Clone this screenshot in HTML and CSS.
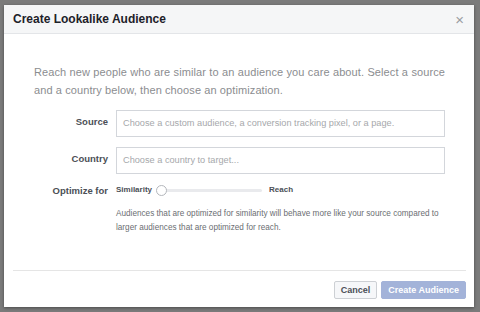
FILE: index.html
```html
<!DOCTYPE html>
<html lang="en">
  <head>
    <meta charset="UTF-8">
    <title>Create Lookalike Audience</title>
    <link rel="stylesheet" href="styles.css">
  </head>
  <body>
    <div class="backdrop">
        <div class="dialog">
            <div class="dialog-header">
                <h2 class="dialog-title">Create Lookalike Audience</h2>
                <span class="close">&#215;</span>
            </div>

            <div class="dialog-body">
                <p class="intro">
                    Reach new people who are similar to an audience you care about. Select a source
                    and a country below, then choose an optimization.
                </p>

                <div class="form-row">
                    <label class="form-label">Source</label>
                    <div class="text-input">Choose a custom audience, a conversion tracking pixel, or a page.</div>
                </div>
                <div class="form-row">
                    <label class="form-label">Country</label>
                    <div class="text-input">Choose a country to target...</div>
                </div>
                <div class="form-row optimize-row">
                    <label class="form-label">Optimize for</label>
                    <div class="slider">
                        <span class="slider-end">Similarity</span>
                        <div class="slider-track">
                            <div class="slider-knob"></div>
                        </div>
                        <span class="slider-end">Reach</span>
                    </div>
                </div>
                <p class="hint">
                    Audiences that are optimized for similarity will behave more like your source compared to
                    larger audiences that are optimized for reach.
                </p>
            </div>

            <div class="dialog-footer">
                <button class="btn">Cancel</button>
                <button class="btn btn-primary" disabled>Create Audience</button>
            </div>
        </div>
    </div>
  </body>
</html>
```

FILE: styles.css
```css
:root {
    --backdrop: #7b7b7b;
    --header-bg: #f5f6f7;
    --border: #dcdee3;
    --text: #333;
    --text-muted: #8b8d90;
    --primary-disabled: #a3b3d9;
}

body {
    margin: 0;
    font-family: 'Liberation Sans', Arial, sans-serif;
    color: var(--text);
    background: var(--backdrop);
}

.backdrop {
    width: 480px;
    height: 312px;
    padding: 5px 6px 5px 4px;
    box-sizing: border-box;
}

.dialog {
    background: #fff;
    height: 302px;
    display: flex;
    flex-direction: column;
    box-shadow: 0 1px 3px rgba(0, 0, 0, 0.4);
}

.dialog-header {
    display: flex;
    align-items: center;
    justify-content: space-between;
    height: 28px;
    padding: 0 10px 0 9px;
    background: var(--header-bg);
    border-bottom: 1px solid #e3e5e8;
}

.dialog-title {
    margin: 0;
    font-size: 12px;
    font-weight: 700;
    color: #1d2129;
}

.close {
    font-size: 15px;
    color: #9a9da2;
    line-height: 1;
}

.dialog-body {
    flex: 1;
    padding: 29px 29px 0 30px;
}

.intro {
    margin: 0 0 11px 0;
    font-size: 11px;
    line-height: 18px;
    letter-spacing: 0.1px;
    color: var(--text-muted);
    text-align: justify;
}

.form-row {
    display: flex;
    align-items: center;
    margin-bottom: 10px;
}

.form-label {
    width: 74px;
    padding-right: 8px;
    margin-bottom: 5px;
    text-align: right;
    font-size: 9.5px;
    font-weight: 700;
    color: #4b4f56;
}

.text-input {
    flex: 1;
    height: 25px;
    line-height: 25px;
    padding: 0 6px;
    border: 1px solid #d3d6db;
    font-size: 9.2px;
    color: #a6a8ab;
}

.optimize-row {
    margin-top: -1px;
    margin-bottom: 10px;
}

.optimize-row .form-label {
    margin-bottom: 0;
}

.slider {
    display: flex;
    align-items: center;
    gap: 5px;
    font-size: 8px;
    font-weight: 700;
    color: #4b4f56;
}

.slider-end {
    line-height: 14px;
}

.slider-track {
    position: relative;
    width: 104px;
    height: 3px;
    margin: 0 2px 0 1px;
    background: #e9eaed;
    border-radius: 2px;
}

.slider-knob {
    position: absolute;
    left: -2px;
    top: -4px;
    width: 9px;
    height: 9px;
    border: 1px solid #b4b7bc;
    border-radius: 50%;
    background: #fff;
}

.hint {
    margin: 0 0 0 82px;
    font-size: 8.2px;
    line-height: 14px;
    color: #6b6e72;
}

.dialog-footer {
    display: flex;
    justify-content: flex-end;
    gap: 4px;
    margin: 0 8px 0 9px;
    padding: 10px 0 8px 0;
    border-top: 1px solid #e5e5e5;
}

.btn {
    height: 18px;
    padding: 0 6px;
    border: 1px solid #cdd0d4;
    border-radius: 2px;
    background: #f6f7f9;
    font-family: inherit;
    font-size: 9px;
    font-weight: 700;
    color: #4b4f56;
}

.btn-primary {
    padding: 0 6px;
    border-color: var(--primary-disabled);
    background: var(--primary-disabled);
    color: #fff;
}
```
